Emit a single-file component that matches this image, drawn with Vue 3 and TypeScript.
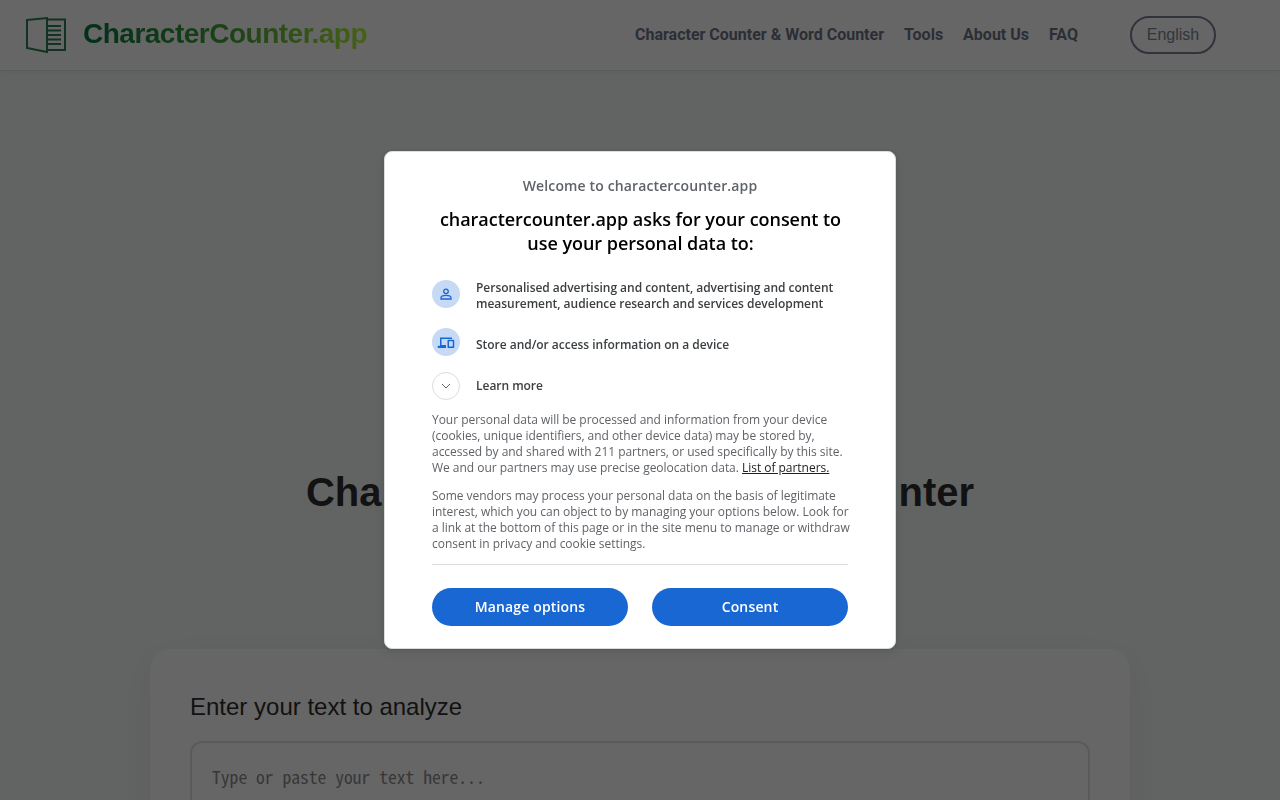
<template>
  <div class="page">
    <header class="site-header">
      <a class="brand">
        <svg class="brand-icon" width="42" height="38" viewBox="0 0 42 38" fill="none" stroke="#2f7f55" stroke-width="2">
          <path d="M2 4 L22 2 V36 L2 32 Z" />
          <path d="M22 3.5 H40 V34 H22" />
          <path d="M23 10 H36 M23 14.5 H36 M23 19 H36 M23 23.5 H36 M23 28 H36" />
        </svg>
        <span class="brand-name">CharacterCounter.app</span>
      </a>
      <nav class="site-nav">
        <a v-for="link in navLinks" :key="link">{{ link }}</a>
      </nav>
      <div class="lang-select">English</div>
    </header>

    <main class="content">
      <h1 class="page-title">Character Counter &amp; Word Counter</h1>
      <section class="card">
        <h2>Enter your text to analyze</h2>
        <textarea class="text-input" placeholder="Type or paste your text here..."></textarea>
      </section>
    </main>

    <div class="overlay">
      <div class="dialog">
        <p class="welcome">Welcome to charactercounter.app</p>
        <h2 class="dialog-title">charactercounter.app asks for your consent to use your personal data to:</h2>

        <ul class="purposes">
          <li class="purpose">
            <span class="purpose-icon">
              <svg width="16" height="16" viewBox="0 0 24 24" fill="none" stroke="#1967d2" stroke-width="2">
                <circle cx="12" cy="8" r="3.4" />
                <path d="M4.5 19.5 V17.5 C4.5 15.2 9 14 12 14 C15 14 19.5 15.2 19.5 17.5 V19.5 Z" />
              </svg>
            </span>
            <span>Personalised advertising and content, advertising and content measurement, audience research and services development</span>
          </li>
          <li class="purpose">
            <span class="purpose-icon">
              <svg width="18" height="18" viewBox="0 0 24 24" fill="#1967d2">
                <path d="M4 6 H20 V8 H6 V16 H12 V20 H1 V17 H4 Z" />
                <path fill-rule="evenodd" d="M15 9 H22 a1 1 0 0 1 1 1 V19 a1 1 0 0 1 -1 1 H15 a1 1 0 0 1 -1 -1 V10 a1 1 0 0 1 1 -1 Z M16 11 V18 H21 V11 Z" />
              </svg>
            </span>
            <span class="purpose-text">Store and/or access information on a device</span>
          </li>
          <li class="purpose purpose-more">
            <span class="purpose-icon more-icon">
              <svg width="12" height="12" viewBox="0 0 12 12" fill="none" stroke="#5f6368" stroke-width="1">
                <path d="M2 4 L6 8 L10 4" />
              </svg>
            </span>
            <span>Learn more</span>
          </li>
        </ul>

        <p class="notice">Your personal data will be processed and information from your device (cookies, unique identifiers, and other device data) may be stored by, accessed by and shared with 211 partners, or used specifically by this site. We and our partners may use precise geolocation data. <a>List of partners.</a></p>
        <p class="notice notice-wide">Some vendors may process your personal data on the basis of legitimate interest, which you can object to by managing your options below. Look for a link at the bottom of this page or in the site menu to manage or withdraw consent in privacy and cookie settings.</p>

        <div class="actions">
          <button type="button">Manage options</button>
          <button type="button">Consent</button>
        </div>
      </div>
    </div>
  </div>
</template>

<script setup lang="ts">
const navLinks: string[] = ['Character Counter & Word Counter', 'Tools', 'About Us', 'FAQ']
</script>

<style>
html,
body {
  margin: 0;
  height: 100%;
  overflow: hidden;
}
</style>

<style scoped>
.page {
  height: 800px;
  overflow: hidden;
  background: #f5faf8;
  font-family: "Liberation Sans", Arial, sans-serif;
}

.site-header {
  display: flex;
  align-items: center;
  height: 71px;
  box-sizing: border-box;
  padding: 0 64px 0 25px;
  background: #fff;
  border-bottom: 1px solid #e2e4e6;
  box-shadow: 0 1px 3px rgba(0, 0, 0, 0.05);
}

.brand {
  display: flex;
  align-items: center;
  gap: 16px;
}

.brand-icon {
  flex-shrink: 0;
}

.brand-name {
  margin-top: -3px;
  font-size: 28px;
  line-height: 36px;
  font-weight: 700;
  letter-spacing: -0.5px;
  background: linear-gradient(90deg, #04773f 0%, #4fa83c 55%, #b0f53a 100%);
  -webkit-background-clip: text;
  background-clip: text;
  color: transparent;
}

.site-nav {
  display: flex;
  gap: 20px;
  margin-top: -2px;
  margin-left: auto;
  font-family: Roboto, sans-serif;
  font-size: 16px;
  font-weight: 700;
  color: #6f7488;
}

.lang-select {
  display: flex;
  align-items: center;
  justify-content: center;
  box-sizing: border-box;
  width: 86px;
  height: 38px;
  margin-left: 52px;
  border: 2px solid #7b8194;
  border-radius: 20px;
  font-size: 16px;
  color: #7f8496;
}

.content {
  padding-top: 396px;
}

.page-title {
  margin: 0 0 132px;
  font-size: 40px;
  line-height: 50px;
  font-weight: 700;
  text-align: center;
  color: #2f2f2f;
}

.card {
  box-sizing: border-box;
  width: 980px;
  height: 400px;
  margin: 0 auto;
  padding: 40px;
  background: #fff;
  border-radius: 20px;
  box-shadow: 0 10px 40px rgba(0, 0, 0, 0.06);
}

.card h2 {
  margin: 1px 0 17px;
  font-size: 24px;
  line-height: 34px;
  font-weight: 400;
  color: #2f2f2f;
}

.text-input {
  display: block;
  box-sizing: border-box;
  width: 100%;
  height: 300px;
  padding: 22px 20px 20px;
  border: 2px solid #dce4ec;
  border-radius: 12px;
  font-family: "Noto Sans Mono CJK SC", "Liberation Mono", monospace;
  font-size: 17.6px;
  line-height: 24px;
  resize: none;
}

.text-input::placeholder {
  color: #8a8a8a;
}

.overlay {
  position: fixed;
  inset: 0;
  display: flex;
  align-items: center;
  justify-content: center;
  background: rgba(0, 0, 0, 0.6);
}

.dialog {
  box-sizing: border-box;
  width: 512px;
  height: 498px;
  padding: 24px 47px 0;
  background: #fff;
  border: 1px solid #dadce0;
  border-radius: 8px;
  box-shadow: 0 1px 3px rgba(60, 64, 67, 0.3), 0 4px 8px 3px rgba(60, 64, 67, 0.15);
  font-family: "Open Sans", sans-serif;
}

.welcome {
  margin: 0 0 11px;
  font-size: 14px;
  line-height: 20px;
  font-weight: 600;
  letter-spacing: 0.13px;
  text-align: center;
  color: #5f6368;
}

.dialog-title {
  margin: 0 0 25px;
  padding-left: 1px;
  font-size: 18px;
  line-height: 24px;
  font-weight: 600;
  letter-spacing: -0.04px;
  text-align: center;
  color: #000;
}

.purposes {
  display: flex;
  flex-direction: column;
  gap: 16px;
  margin: 0 0 12px;
  padding: 0;
  list-style: none;
}

.purpose {
  display: flex;
  gap: 16px;
  font-size: 12px;
  line-height: 16px;
  font-weight: 600;
  letter-spacing: -0.03px;
  color: #3c4043;
}

.purpose-text {
  padding-top: 9px;
}

.purpose-more {
  align-items: center;
}

.purpose-icon {
  display: flex;
  align-items: center;
  justify-content: center;
  flex-shrink: 0;
  box-sizing: border-box;
  width: 28px;
  height: 28px;
  border-radius: 50%;
  background: #c6daf6;
}

.more-icon {
  background: #fff;
  border: 1px solid #dadce0;
}

.notice {
  margin: 0 0 12px;
  font-size: 12px;
  line-height: 16px;
  letter-spacing: -0.03px;
  color: #5f6368;
}

.notice-wide {
  margin-right: -4px;
}

.notice a {
  color: #202124;
  text-decoration: underline;
}

.actions {
  display: flex;
  gap: 24px;
  margin-top: 12px;
  padding-top: 23px;
  border-top: 1px solid #dadce0;
}

.actions button {
  flex: 1;
  height: 38px;
  padding-bottom: 2px;
  border: none;
  border-radius: 19px;
  background: #1967d2;
  font-family: inherit;
  font-size: 14px;
  font-weight: 600;
  letter-spacing: 0.15px;
  color: #fff;
}
</style>
